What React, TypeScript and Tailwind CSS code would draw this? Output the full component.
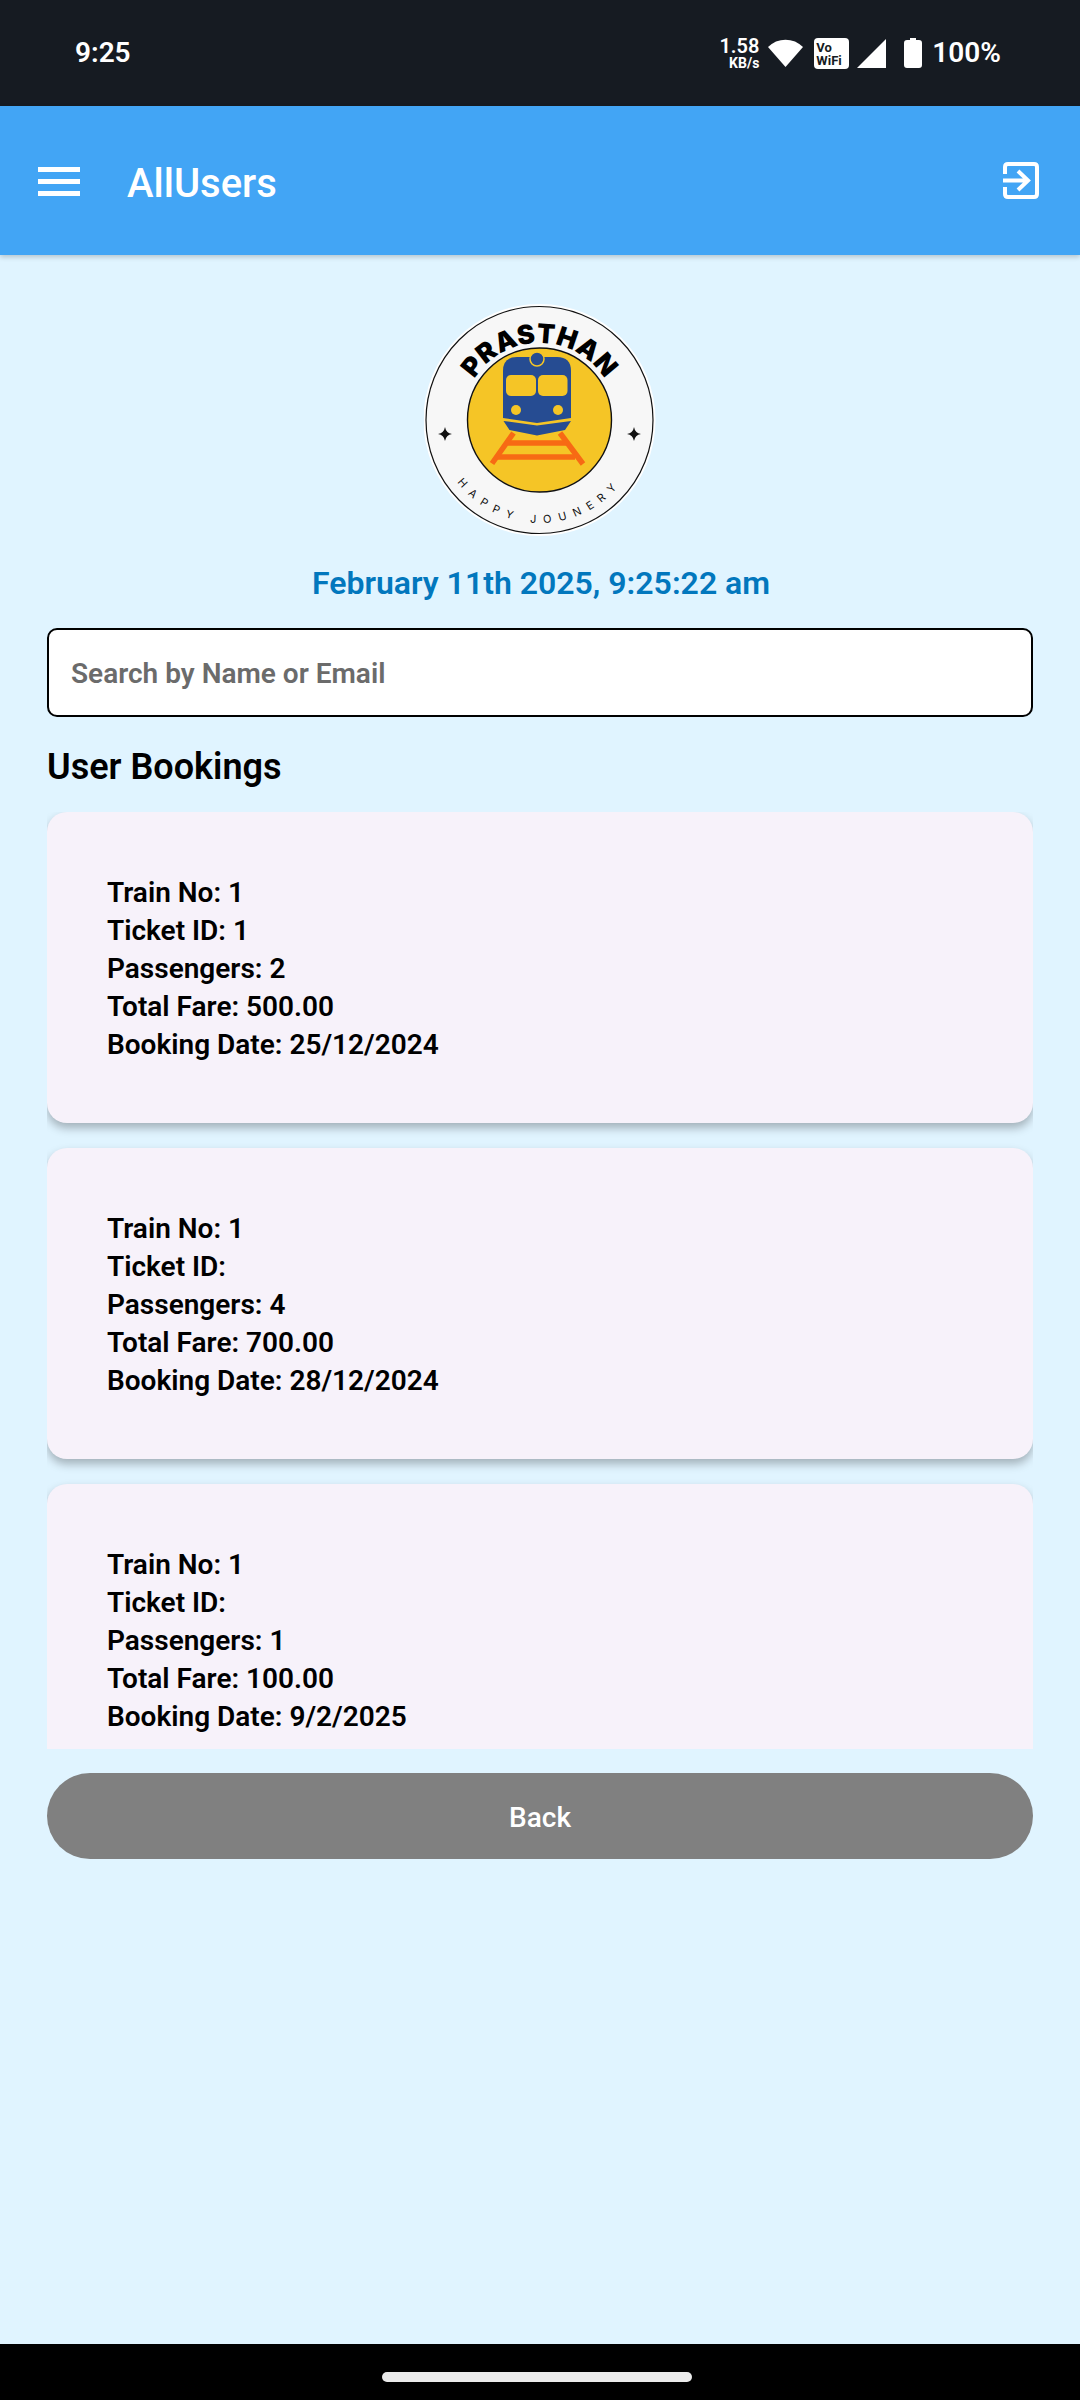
type Booking = {
  trainNo: string;
  ticketId: string;
  passengers: number;
  fare: string;
  date: string;
};

const bookings: Booking[] = [
  { trainNo: "1", ticketId: "1", passengers: 2, fare: "500.00", date: "25/12/2024" },
  { trainNo: "1", ticketId: "", passengers: 4, fare: "700.00", date: "28/12/2024" },
  { trainNo: "1", ticketId: "", passengers: 1, fare: "100.00", date: "9/2/2025" },
];

function StatusBar() {
  return (
    <div className="h-[106px] bg-[#161b22] flex items-center pl-[75px] pr-[79px] text-white shrink-0">
      <span className="text-[28px] leading-none font-semibold">9:25</span>
      <div className="ml-auto flex items-center">
        <div className="flex flex-col items-end leading-none mr-[9px]">
          <span className="text-[20px] leading-[20px] font-semibold">1.58</span>
          <span className="text-[14px] leading-[14px] font-bold">KB/s</span>
        </div>
        <svg width="35" height="28" viewBox="0 0 35 28" className="mr-[11px]">
          <path d="M17.5 28 L0 8 Q3 5 8 2.5 Q17.5 -1 27 2.5 Q32 5 35 8 Z" fill="#fff" />
        </svg>
        <div className="w-[35px] h-[31px] bg-white rounded-[4px] text-[#161b22] text-[13px] font-bold leading-[13px] pl-[2px] pt-[3px] mr-[8px]">
          Vo
          <br />
          WiFi
        </div>
        <svg width="29" height="29" viewBox="0 0 29 29" className="mr-[18px]">
          <path d="M29 0 V29 H0 Z" fill="#fff" />
        </svg>
        <svg width="18" height="30" viewBox="0 0 18 30" className="mr-[10px]">
          <path d="M6 0 H12 V2 H15 Q18 2 18 5 V27 Q18 30 15 30 H3 Q0 30 0 27 V5 Q0 2 3 2 H6 Z" fill="#fff" />
        </svg>
        <span className="text-[28px] leading-none font-semibold">100%</span>
      </div>
    </div>
  );
}

function AppBar() {
  return (
    <div className="h-[149px] bg-[#42a5f5] flex items-center pl-[38px] pr-[41px] text-white shrink-0 shadow-[0_2px_5px_rgba(0,0,0,0.2)] relative">
      <div className="w-[42px] flex flex-col gap-[7px] mt-[1px]">
        <div className="h-[5px] bg-white" />
        <div className="h-[5px] bg-white" />
        <div className="h-[5px] bg-white" />
      </div>
      <span className="text-[40px] font-medium ml-[47px] mt-[6px]">AllUsers</span>
      <svg width="36" height="37" viewBox="0 0 36 37" fill="none" stroke="#fff" strokeWidth="4" className="ml-auto">
        <path d="M2 12 V5 Q2 2 5 2 H31 Q34 2 34 5 V32 Q34 35 31 35 H5 Q2 35 2 32 V25" />
        <path d="M0 18.5 H24 M15 9 L25 18.5 L15 28" />
      </svg>
    </div>
  );
}

function Logo() {
  return (
    <svg width="232" height="232" viewBox="0 0 232 232" className="block">
      <circle cx="115.5" cy="116" r="116" fill="#fff" />
      <circle cx="115.5" cy="116" r="113.5" fill="#f7f7f7" stroke="#111" strokeWidth="1.2" />
      <circle cx="115.5" cy="116" r="72" fill="#f5c526" stroke="#111" strokeWidth="1.4" />
      <defs>
        <path id="logo-top" d="M 38.5 116 A 77 77 0 0 1 192.5 116" />
        <path id="logo-bottom" d="M 12.5 116 A 103 103 0 0 0 218.5 116" />
      </defs>
      <text fontFamily="Inter, sans-serif" fontWeight="900" fontSize="26.5" letterSpacing="0.3" fill="#000">
        <textPath href="#logo-top" startOffset="50%" textAnchor="middle">PRASTHAN</textPath>
      </text>
      <text fontFamily="Inter, sans-serif" fontSize="11" fill="#111" letterSpacing="7.5">
        <textPath href="#logo-bottom" startOffset="50%" textAnchor="middle">HAPPY JOUNERY</textPath>
      </text>
      <path d="M0 -7 Q1 -1 7 0 Q1 1 0 7 Q-1 1 -7 0 Q-1 -1 0 -7 Z" transform="translate(21 130)" fill="#111" />
      <path d="M0 -7 Q1 -1 7 0 Q1 1 0 7 Q-1 1 -7 0 Q-1 -1 0 -7 Z" transform="translate(210 130)" fill="#111" />
      {/* train */}
      <path d="M93 53 H133 Q147 53 147 67 V114 L113 119 L79 114 V67 Q79 53 93 53 Z" fill="#264c92" />
      <circle cx="113" cy="55" r="7" fill="#264c92" stroke="#f5c526" strokeWidth="1.5" />
      <rect x="82" y="71" width="30" height="21" rx="5" fill="#f5c526" />
      <rect x="114" y="71" width="29.5" height="21" rx="5" fill="#f5c526" />
      <circle cx="92" cy="106" r="5" fill="#f5c526" />
      <circle cx="134" cy="106" r="5" fill="#f5c526" />
      <path d="M79.5 117 L113 121.5 L147 117 L141 126 L113 131.5 L85.5 126 Z" fill="#264c92" />
      {/* rails */}
      <path d="M89.5 129 L68 159.5 M136 129 L159 160" stroke="#f76a14" strokeWidth="5.5" fill="none" />
      <path d="M84 139 H142 M74 153 H151" stroke="#f76a14" strokeWidth="5.5" fill="none" />
    </svg>
  );
}

function BookingCard({ booking }: { booking: Booking }) {
  return (
    <div className="bg-[#f7f2fa] rounded-[20px] px-[60px] pt-[62px] pb-[59px] shadow-[0_5px_10px_rgba(0,0,0,0.28)] text-[28px] leading-[38px] font-semibold text-black shrink-0">
      <p>Train No: {booking.trainNo}</p>
      <p>Ticket ID: {booking.ticketId}</p>
      <p>Passengers: {booking.passengers}</p>
      <p>Total Fare: {booking.fare}</p>
      <p>Booking Date: {booking.date}</p>
    </div>
  );
}

export default function App() {
  return (
    <div className="w-[1080px] h-[2400px] flex flex-col overflow-hidden bg-[#e0f4ff] font-['Roboto',sans-serif]">
      <StatusBar />
      <AppBar />
      <main className="flex-1 flex flex-col min-h-0 px-[47px]">
        <div className="flex justify-center mt-[49px]">
          <Logo />
        </div>
        <p className="text-center text-[32px] font-semibold text-[#0277bd] mt-[26px] pl-[2px] leading-[42px]">
          February 11th 2025, 9:25:22 am
        </p>
        <div className="mt-[24px] h-[89px] rounded-[10px] border-[2.5px] border-black bg-white flex items-center pl-[22px] pt-[2px]">
          <span className="text-[28px] font-semibold text-[#6b6b6b]">Search by Name or Email</span>
        </div>
        <h2 className="text-[36px] font-semibold text-black mt-[28px] leading-[44px]">User Bookings</h2>
        <div className="h-[937px] mt-[23px] overflow-hidden flex flex-col gap-[25px]">
          {bookings.map((b, i) => (
            <BookingCard key={i} booking={b} />
          ))}
        </div>
        <button className="mt-[24px] h-[86px] pt-[3px] rounded-full bg-[#808080] text-white text-[28px] font-medium shrink-0">
          Back
        </button>
      </main>
      <div className="h-[56px] bg-black flex items-center justify-center pr-[6px] shrink-0">
        <div className="w-[310px] h-[10px] bg-[#ebebeb] rounded-[5px] mt-[10px]" />
      </div>
    </div>
  );
}
